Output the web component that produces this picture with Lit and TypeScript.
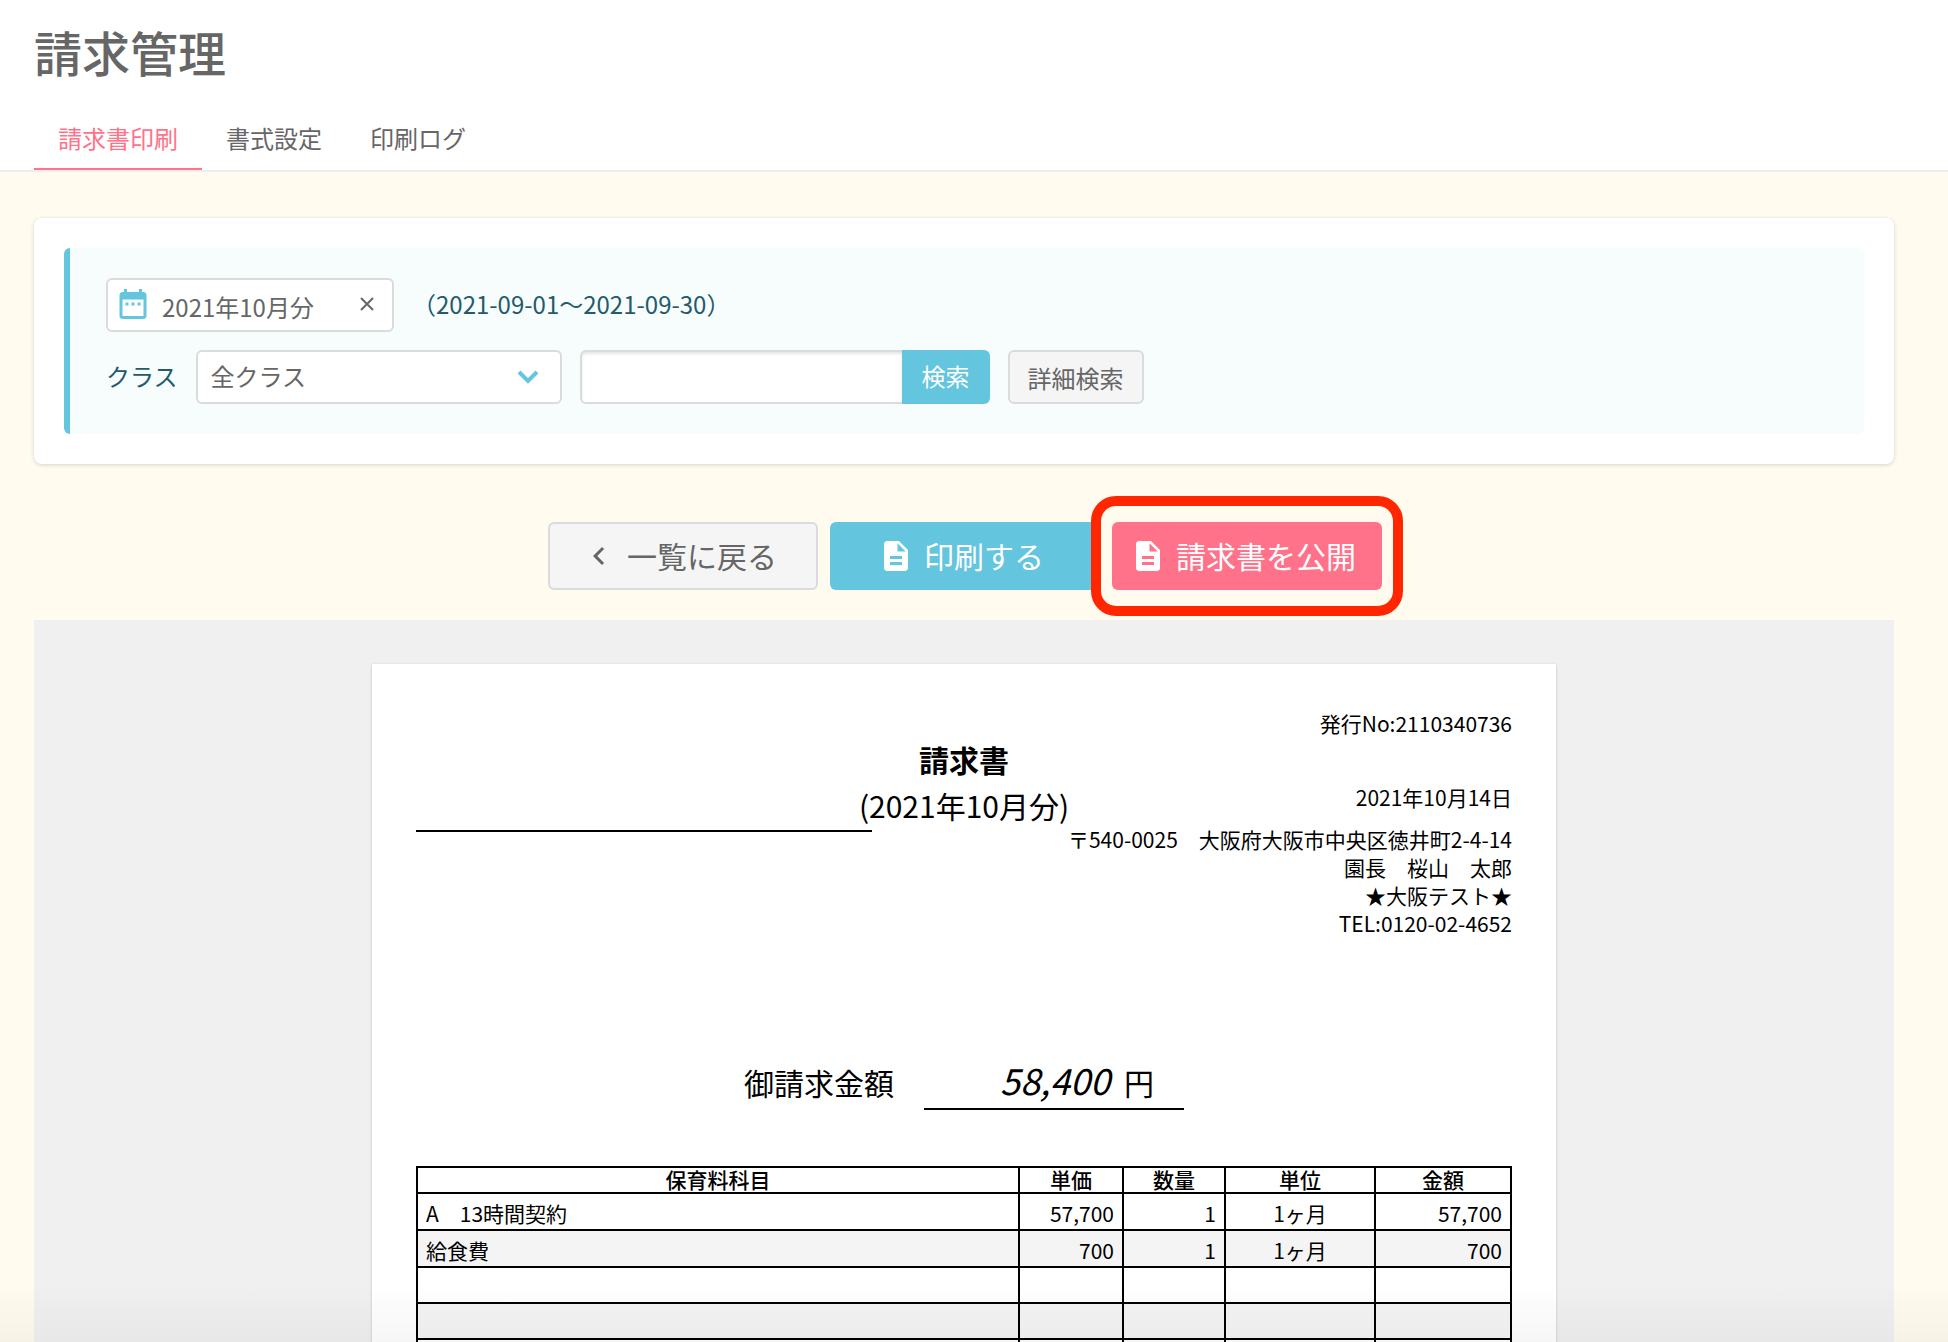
import { LitElement, html, css, svg } from "lit";
import { customElement, state } from "lit/decorators.js";
import { classMap } from "lit/directives/class-map.js";

interface InvoiceRow {
  item: string;
  price: string;
  count: string;
  unit: string;
  total: string;
}

const TABS = ["請求書印刷", "書式設定", "印刷ログ"];

const ROWS: InvoiceRow[] = [
  { item: "A　13時間契約", price: "57,700", count: "1", unit: "1ヶ月", total: "57,700" },
  { item: "給食費", price: "700", count: "1", unit: "1ヶ月", total: "700" },
];

const BLANK_ROWS = 6;

const documentIcon = html`<svg class="icon" viewBox="0 0 24 24" aria-hidden="true">
  ${svg`<path fill="currentColor" fill-rule="evenodd" d="M6 2C4.900 2 4 2.900 4 4V20C4 21.100 4.900 22 6 22H18C19.100 22 20 21.100 20 20V8L14 2ZM13 3.500L18.500 9H13ZM8 12H16V14H8ZM8 16H16V18H8Z"/>`}
</svg>`;

const chevronIcon = html`<svg class="icon" viewBox="0 0 24 24" aria-hidden="true">
  ${svg`<path fill="currentColor" d="M15.410 7.410L14 6L8 12L14 18L15.410 16.590L10.830 12Z"/>`}
</svg>`;

@customElement("app-root")
export class AppRoot extends LitElement {
  @state() private tab = 0;
  @state() private month = "2021年10月分";

  static styles = css`
    :host {
      display: block;
      position: relative;
      height: 100vh;
      overflow: hidden;
      background: #fffbee;
      color: #666;
      font-family: "Noto Sans CJK JP", sans-serif;
      font-size: 24px;
      line-height: 36px;
    }
    * {
      box-sizing: border-box;
    }
    button,
    input,
    select {
      font: inherit;
      color: inherit;
      margin: 0;
    }
    button {
      cursor: pointer;
    }
    .scroll {
      height: 100%;
      overflow-y: auto;
      scrollbar-width: none;
    }
    .header {
      background: #fff;
      padding: 16px 54px 0 34px;
      border-bottom: 2px solid #ededed;
    }
    .title {
      margin: 0 0 22px;
      font-size: 48px;
      line-height: 70px;
      font-weight: 500;
    }
    .tabs {
      display: flex;
    }
    .tab {
      padding: 12px 24px;
      border-bottom: 2px solid transparent;
      color: inherit;
      text-decoration: none;
    }
    .tab.active {
      color: #ff728a;
      border-color: #ff728a;
    }
    .content {
      padding: 46px 54px 0 34px;
    }
    .card {
      background: #fff;
      border-radius: 8px;
      padding: 30px;
      box-shadow: 0 1px 4px rgba(0, 0, 0, 0.16);
    }
    .filters {
      display: flex;
      flex-direction: column;
      gap: 18px;
      padding: 30px 36px;
      border-left: 6px solid #63c5de;
      border-radius: 6px;
      background: #f7fdfd;
    }
    .row {
      display: flex;
      align-items: center;
      gap: 18px;
      color: #245a6b;
    }
    .row > span,
    .row > label {
      padding-bottom: 2px;
    }
    .month {
      display: flex;
      align-items: center;
      width: 288px;
      height: 54px;
      padding: 0 10px 2px 7px;
      border: 2px solid #dbdbdb;
      border-radius: 6px;
      background: #fff;
      color: #666;
    }
    .month .icon {
      color: #63c5de;
    }
    .month-input {
      flex: 1;
      min-width: 0;
      height: 42px;
      margin: 4px 0 0 11px;
      padding: 0;
      border: 0;
      outline: 0;
      background: none;
    }
    .clear {
      display: flex;
      padding: 6px;
      border: 0;
      background: none;
    }
    .clear svg {
      width: 18px;
      height: 18px;
    }
    .select-wrap {
      position: relative;
      width: 366px;
    }
    .select {
      appearance: none;
      width: 100%;
      height: 54px;
      padding: 0 48px 2px 13px;
      border: 2px solid #dbdbdb;
      border-radius: 6px;
      background: #fff;
      color: #666;
    }
    .arrow {
      position: absolute;
      right: 22px;
      top: 18px;
      width: 24px;
      height: 18px;
      pointer-events: none;
      color: #63c5de;
    }
    .search {
      display: flex;
      width: 410px;
    }
    .search-input {
      flex: 1;
      min-width: 0;
      height: 54px;
      padding: 0 14px;
      border: 2px solid #dbdbdb;
      border-right: 0;
      border-radius: 6px 0 0 6px;
      background: #fff;
      box-shadow: inset 0 2px 3px rgba(0, 0, 0, 0.1);
    }
    .search-button {
      padding: 0 20px 2px;
      border: 0;
      border-radius: 0 6px 6px 0;
      background: #63c5de;
      color: #fff;
    }
    .detail {
      height: 54px;
      padding: 2px 18px 0;
      border: 2px solid #dbdbdb;
      border-radius: 6px;
      background: #f5f5f5;
      color: #666;
    }
    .icon {
      flex: none;
      width: 36px;
      height: 36px;
    }
    .actions {
      display: flex;
      justify-content: center;
      gap: 12px;
      padding: 58px 0 30px 2px;
    }
    .action {
      display: flex;
      align-items: center;
      justify-content: center;
      gap: 10px;
      width: 270px;
      height: 68px;
      padding: 0 8px 0 0;
      border: 0;
      border-radius: 6px;
      color: #fff;
      font-size: 30px;
      white-space: nowrap;
    }
    .action span {
      padding-bottom: 2px;
    }
    .action.back {
      border: 2px solid #dbdbdb;
      background: #f5f5f5;
      color: #666;
    }
    .action.print {
      background: #63c5de;
    }
    .action.publish {
      background: #ff728a;
    }
    .marked {
      position: relative;
    }
    .ring {
      position: absolute;
      inset: -26px -21px;
      border: 10px solid #ff2600;
      border-radius: 25px;
      background: #fffbee;
    }
    .marked .action {
      position: relative;
    }
    .preview {
      display: flex;
      justify-content: center;
      padding: 44px;
      background: #f0f0f0;
    }
    .paper {
      width: 1184px;
      padding: 44px;
      background: #fff;
      box-shadow: 0 1px 3px rgba(0, 0, 0, 0.2);
      color: #000;
      font-size: 21px;
      line-height: 28px;
    }
    .invoice-head {
      display: grid;
      grid-template-columns: minmax(0, 1fr) auto minmax(0, 1fr);
    }
    .addressee {
      width: 456px;
      height: 124px;
      border-bottom: 2px solid #000;
    }
    .invoice-title {
      padding-top: 28px;
      text-align: center;
      font-size: 30px;
      line-height: 46px;
    }
    .invoice-title h2 {
      margin: 0;
      font-size: inherit;
      font-weight: 700;
    }
    .issuer {
      display: flex;
      flex-direction: column;
      align-items: flex-end;
      white-space: nowrap;
      padding-top: 1px;
    }
    .issue-date {
      margin: 46px 0 14px;
    }
    .amount {
      display: flex;
      justify-content: center;
      align-items: baseline;
      gap: 30px;
      margin-top: 116px;
      font-size: 30px;
      line-height: 52px;
    }
    .amount-value {
      display: flex;
      justify-content: flex-end;
      align-items: baseline;
      gap: 14px;
      width: 260px;
      padding-right: 30px;
      border-bottom: 2px solid #000;
    }
    .amount-number {
      font-size: 36px;
      font-style: italic;
    }
    .table {
      width: 100%;
      margin-top: 56px;
      border-collapse: collapse;
      table-layout: fixed;
    }
    .table th,
    .table td {
      border: 2px solid #000;
      padding: 0 8px;
      text-align: right;
    }
    .table th {
      height: 26px;
      padding: 0 8px 2px;
      line-height: 22px;
      font-weight: 500;
      text-align: center;
    }
    .table td {
      height: 36px;
      line-height: 28px;
    }
    .table .filled td {
      height: 37px;
      padding-top: 2px;
    }
    .table tbody tr:nth-child(even) {
      background: #f4f4f4;
    }
    .table .name {
      text-align: left;
    }
    .table .unit {
      text-align: center;
    }
    .c-price {
      width: 104px;
    }
    .c-count {
      width: 102px;
    }
    .c-unit {
      width: 150px;
    }
    .c-total {
      width: 136px;
    }
    .fade {
      position: absolute;
      left: 0;
      right: 0;
      bottom: 0;
      height: 60px;
      background: linear-gradient(rgba(0, 0, 0, 0), rgba(0, 0, 0, 0.035));
      pointer-events: none;
    }
  `;

  private selectTab(event: Event, index: number) {
    event.preventDefault();
    this.tab = index;
  }

  private renderFilters() {
    return html`<section class="card">
      <div class="filters">
        <div class="row">
          <div class="month">
            <svg class="icon" viewBox="0 0 24 24" aria-hidden="true">
              <path
                fill="currentColor"
                fill-rule="evenodd"
                d="M19 4H18V2H16V4H8V2H6V4H5C3.890 4 3 4.900 3 6V20C3 21.100 3.890 22 5 22H19C20.100 22 21 21.100 21 20V6C21 4.900 20.100 4 19 4ZM19 20H5V9H19ZM7 11H9V13H7ZM11 11H13V13H11ZM15 11H17V13H15Z"
              />
            </svg>
            <input
              class="month-input"
              type="text"
              aria-label="請求月"
              .value=${this.month}
              @input=${(e: Event) => (this.month = (e.target as HTMLInputElement).value)}
            />
            <button class="clear" type="button" aria-label="クリア" @click=${() => (this.month = "")}>
              <svg viewBox="0 0 18 18" aria-hidden="true">
                <path d="M3 3L15 15M15 3L3 15" fill="none" stroke="currentColor" stroke-width="2" />
              </svg>
            </button>
          </div>
          <span>（2021-09-01〜2021-09-30）</span>
        </div>
        <div class="row">
          <label for="class">クラス</label>
          <div class="select-wrap">
            <select class="select" id="class">
              <option>全クラス</option>
            </select>
            <svg class="arrow" viewBox="0 0 24 18" aria-hidden="true">
              <path d="M3 4L12 13L21 4" fill="none" stroke="currentColor" stroke-width="4" />
            </svg>
          </div>
          <div class="search">
            <input class="search-input" type="text" aria-label="検索語" />
            <button class="search-button" type="button">検索</button>
          </div>
          <button class="detail" type="button">詳細検索</button>
        </div>
      </div>
    </section>`;
  }

  private renderInvoice() {
    return html`<article class="paper">
      <div class="invoice-head">
        <div class="addressee"></div>
        <div class="invoice-title">
          <h2>請求書</h2>
          <div>(2021年10月分)</div>
        </div>
        <div class="issuer">
          <div>発行No:2110340736</div>
          <div class="issue-date">2021年10月14日</div>
          <div>〒540-0025　大阪府大阪市中央区徳井町2-4-14</div>
          <div>園長　桜山　太郎</div>
          <div>★大阪テスト★</div>
          <div>TEL:0120-02-4652</div>
        </div>
      </div>
      <div class="amount">
        <span>御請求金額</span>
        <span class="amount-value"><span class="amount-number">58,400</span><span>円</span></span>
      </div>
      <table class="table">
        <colgroup>
          <col />
          <col class="c-price" />
          <col class="c-count" />
          <col class="c-unit" />
          <col class="c-total" />
        </colgroup>
        <thead>
          <tr>
            <th>保育料科目</th>
            <th>単価</th>
            <th>数量</th>
            <th>単位</th>
            <th>金額</th>
          </tr>
        </thead>
        <tbody>
          ${ROWS.map(
            (r) => html`<tr class="filled">
              <td class="name">${r.item}</td>
              <td>${r.price}</td>
              <td>${r.count}</td>
              <td class="unit">${r.unit}</td>
              <td>${r.total}</td>
            </tr>`
          )}
          ${Array.from(
            { length: BLANK_ROWS },
            () => html`<tr>
              <td></td>
              <td></td>
              <td></td>
              <td></td>
              <td></td>
            </tr>`
          )}
        </tbody>
      </table>
    </article>`;
  }

  render() {
    return html`<div class="scroll">
        <header class="header">
          <h1 class="title">請求管理</h1>
          <nav class="tabs">
            ${TABS.map(
              (name, i) => html`<a
                href="#"
                class=${classMap({ tab: true, active: i === this.tab })}
                @click=${(e: Event) => this.selectTab(e, i)}
                >${name}</a
              >`
            )}
          </nav>
        </header>
        <main class="content">
          ${this.renderFilters()}
          <div class="actions">
            <button class="action back" type="button">${chevronIcon}<span>一覧に戻る</span></button>
            <button class="action print" type="button">${documentIcon}<span>印刷する</span></button>
            <div class="marked">
              <div class="ring"></div>
              <button class="action publish" type="button">${documentIcon}<span>請求書を公開</span></button>
            </div>
          </div>
          <section class="preview">${this.renderInvoice()}</section>
        </main>
      </div>
      <div class="fade"></div>`;
  }
}
